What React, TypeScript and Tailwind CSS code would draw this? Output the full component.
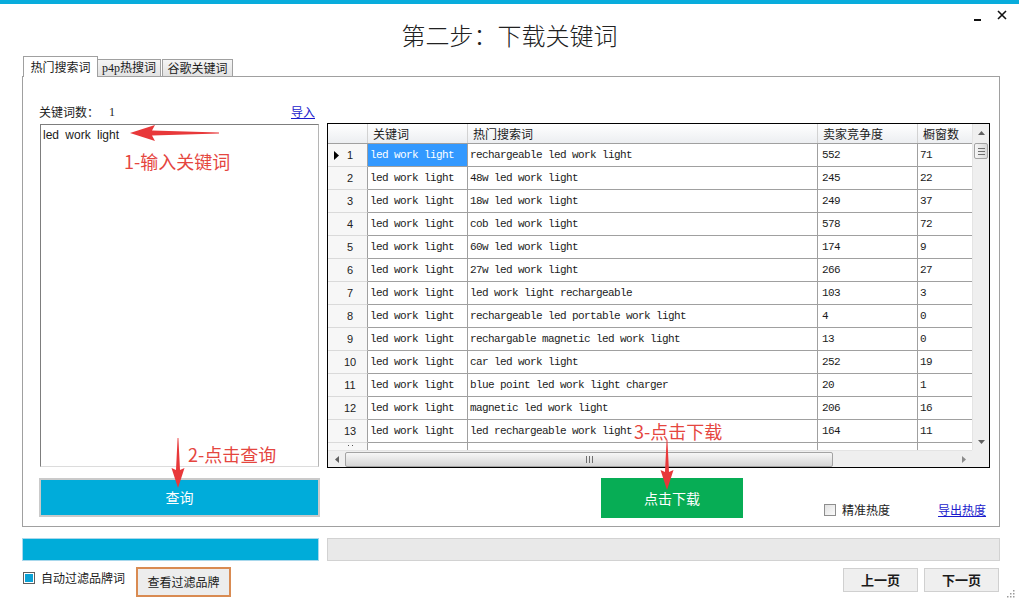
import React from "react";

const rows: [string, string, string][] = [
  ["rechargeable led work light", "552", "71"],
  ["48w led work light", "245", "22"],
  ["18w led work light", "249", "37"],
  ["cob led work light", "578", "72"],
  ["60w led work light", "174", "9"],
  ["27w led work light", "266", "27"],
  ["led work light rechargeable", "103", "3"],
  ["rechargeable led portable work light", "4", "0"],
  ["rechargable magnetic led work light", "13", "0"],
  ["car led work light", "252", "19"],
  ["blue point led work light charger", "20", "1"],
  ["magnetic led work light", "206", "16"],
  ["led rechargeable work light", "164", "11"],
];

const mono = "font-['Liberation_Mono',monospace] text-[11px] tracking-[-0.6px]";

function Thumb({ vertical }: { vertical?: boolean }) {
  return (
    <div
      className={
        vertical
          ? "h-[16px] mx-[1px] rounded-[2px] border border-[#a3a3a3] bg-gradient-to-r from-[#f6f6f6] to-[#dadada] flex flex-col items-center justify-center gap-[2px]"
          : "h-[15px] my-[1px] w-[488px] rounded-[2px] border border-[#a3a3a3] bg-gradient-to-b from-[#f6f6f6] to-[#d6d6d6] flex items-center justify-center gap-[2px]"
      }
    >
      {vertical
        ? [0, 1, 2].map((i) => <div key={i} className="w-[7px] h-[1px] bg-[#6f6f6f]" />)
        : [0, 1, 2].map((i) => <div key={i} className="w-[1px] h-[7px] bg-[#6f6f6f]" />)}
    </div>
  );
}

function Grid() {
  return (
    <div className="w-[663px] h-[345px] border border-black flex flex-col bg-white">
      <div className="flex h-[326px]">
        <div className="w-[644px] overflow-hidden flex flex-col">
          <div className="flex h-[20px] shrink-0 bg-gradient-to-b from-white to-[#eceef1] border-b border-[#a0a0a0] text-[12px] leading-[19px]">
            <div className="w-[40px] border-r border-[#d2d2d2]" />
            <div className="w-[100px] pl-[5px] border-r border-[#d2d2d2]">关键词</div>
            <div className="w-[350px] pl-[5px] border-r border-[#d2d2d2]">热门搜索词</div>
            <div className="w-[100px] pl-[5px] border-r border-[#d2d2d2]">卖家竞争度</div>
            <div className="w-[54px] pl-[5px]">橱窗数</div>
          </div>
          {rows.map((r, i) => (
            <div key={i} className="flex h-[23px] shrink-0">
              <div className="w-[40px] flex items-center bg-[#f7f7f7] border-b border-[#dadada] border-r border-r-[#a0a0a0]">
                <div className="w-[12px] flex justify-end pr-[1px]">
                  {i === 0 && (
                    <svg width="5" height="9" viewBox="0 0 5 9">
                      <polygon points="0,0 5,4.5 0,9" fill="#000" />
                    </svg>
                  )}
                </div>
                <div className="w-[20px] text-center font-['Liberation_Sans',sans-serif] text-[11px] text-[#222]">{i + 1}</div>
              </div>
              <div
                className={
                  "w-[100px] pl-[2px] flex items-center border-b border-r border-[#a0a0a0] " +
                  mono +
                  (i === 0 ? " bg-[#3399ff] text-white" : "")
                }
              >
                led work light
              </div>
              <div className={"w-[350px] pl-[2px] flex items-center border-b border-r border-[#a0a0a0] whitespace-nowrap " + mono}>
                {r[0]}
              </div>
              <div className={"w-[100px] pl-[4px] flex items-center border-b border-r border-[#a0a0a0] " + mono}>{r[1]}</div>
              <div className={"w-[54px] pl-[2px] flex items-center border-b border-[#a0a0a0] " + mono}>{r[2]}</div>
            </div>
          ))}
          <div className="flex h-[7px] shrink-0 overflow-hidden">
            <div className="w-[40px] bg-[#f7f7f7] border-r border-[#a0a0a0] flex justify-center pt-[2px]">
              <div className="flex gap-[3px] ml-[6px]">
                <div className="w-[1px] h-[1px] bg-[#555]" />
                <div className="w-[1px] h-[1px] bg-[#555]" />
              </div>
            </div>
            <div className="w-[100px] border-r border-[#a0a0a0]" />
            <div className="w-[350px] border-r border-[#a0a0a0]" />
            <div className="w-[100px] border-r border-[#a0a0a0]" />
            <div className="w-[54px]" />
          </div>
        </div>
        <div className="w-[17px] bg-[#efefef] border-l border-[#e4e4e4] flex flex-col">
          <div className="h-[17px] flex items-center justify-center">
            <svg width="7" height="4" viewBox="0 0 7 4">
              <polygon points="0,4 3.5,0 7,4" fill="#606060" />
            </svg>
          </div>
          <div className="mt-[2px]">
            <Thumb vertical />
          </div>
          <div className="flex-1" />
          <div className="h-[17px] flex items-center justify-center">
            <svg width="7" height="4" viewBox="0 0 7 4">
              <polygon points="0,0 3.5,4 7,0" fill="#606060" />
            </svg>
          </div>
        </div>
      </div>
      <div className="flex h-[17px]">
        <div className="w-[644px] bg-[#efefef] border-t border-[#e4e4e4] flex items-center">
          <div className="w-[17px] h-full flex items-center justify-center">
            <svg width="4" height="7" viewBox="0 0 4 7">
              <polygon points="4,0 0,3.5 4,7" fill="#606060" />
            </svg>
          </div>
          <Thumb />
          <div className="flex-1" />
          <div className="w-[17px] h-full flex items-center justify-center">
            <svg width="4" height="7" viewBox="0 0 4 7">
              <polygon points="0,0 4,3.5 0,7" fill="#8a8a8a" />
            </svg>
          </div>
        </div>
        <div className="w-[17px] bg-[#efefef]" />
      </div>
    </div>
  );
}

export default function App() {
  return (
    <div className="relative w-[1019px] h-[603px] bg-white overflow-hidden text-[#1b1b1b] font-['Noto_Sans_CJK_SC','Liberation_Sans',sans-serif]">
      <div className="h-[4px] bg-[#08acdc]" />
      <div className="flex h-[52px]">
        <div className="w-[90px]" />
        <div className="flex-1 flex justify-center items-center pt-[10px] text-[24px] leading-[30px] text-[#222] font-light">
          第二步：下载关键词
        </div>
        <div className="w-[90px] flex justify-end items-start pr-[12px] pt-[6px] gap-[15px]">
          <svg width="8" height="10" viewBox="0 0 8 10" className="mt-[1px]">
            <rect x="0" y="8" width="7" height="2" fill="#111" />
          </svg>
          <svg width="10" height="10" viewBox="0 0 10 10">
            <path d="M1 1 L9 9 M9 1 L1 9" stroke="#111" strokeWidth="1.6" />
          </svg>
        </div>
      </div>
      <div className="flex items-end h-[21px] pl-[23px] text-[12px]">
        <div className="relative z-10 w-[75px] h-[21px] bg-white border-t border-l border-r border-[#a0a0a0] flex items-center justify-center">
          热门搜索词
        </div>
        <div className="w-[63px] h-[18px] bg-gradient-to-b from-[#f5f5f5] to-[#e2e2e2] border border-[#a0a0a0] border-l-0 flex items-center justify-center font-['Liberation_Serif','Noto_Sans_CJK_SC',serif]">
          p4p热搜词
        </div>
        <div className="ml-[1px] w-[71px] h-[18px] bg-gradient-to-b from-[#f5f5f5] to-[#e2e2e2] border border-[#a0a0a0] flex items-center justify-center">
          谷歌关键词
        </div>
      </div>
      <div className="ml-[22px] -mt-[1px] w-[978px] h-[451px] border border-[#a0a0a0] bg-white flex pt-[27px] pl-[16px] gap-[7px]">
        <div className="w-[281px] flex flex-col">
          <div className="h-[16px] flex items-center text-[12px]">
            <span>关键词数：</span>
            <span className="ml-[10px] font-['Liberation_Serif',serif]">1</span>
            <span className="ml-auto mr-[5px] text-[#1a1acc] underline">导入</span>
          </div>
          <div className="mt-[4px] ml-[1px] w-[279px] h-[343px] border border-t-[#7d7d7d] border-l-[#7d7d7d] border-r-[#b5b5b5] border-b-[#dcdcdc] px-[2px] pt-[1px] font-['Liberation_Sans',sans-serif] text-[12px] [word-spacing:3px]">
            led work light
          </div>
          <div className="mt-[11px] h-[39px] w-[281px] border-2 border-[#cacaca] bg-[#00acda] flex items-center justify-center text-white text-[14px]">
            查询
          </div>
        </div>
        <div className="w-[663px] flex flex-col">
          <div className="mt-[19px]">
            <Grid />
          </div>
          <div className="mt-[10px] h-[40px] flex">
            <div className="ml-[274px] w-[142px] h-[40px] bg-[#07ad55] flex items-center justify-center text-white text-[14px]">
              点击下载
            </div>
            <div className="ml-[81px] mt-[25px] h-[14px] flex items-center text-[12px]">
              <div className="w-[12px] h-[12px] border border-[#8e8e8e] bg-gradient-to-br from-[#e2e2e2] to-[#fafafa]" />
              <span className="ml-[6px]">精准热度</span>
              <span className="ml-[48px] text-[#1a1acc] underline">导出热度</span>
            </div>
          </div>
        </div>
      </div>
      <div className="mt-[11px] ml-[22px] flex gap-[8px] h-[23px]">
        <div className="w-[297px] h-[23px] bg-[#00acd9] border border-[#a8d8ec]" />
        <div className="w-[673px] h-[23px] bg-[#e9e9e9] border border-[#d2d2d2]" />
      </div>
      <div className="mt-[6px] h-[30px] flex items-start text-[12px]">
        <div className="ml-[23px] mt-[5px] w-[12px] h-[12px] border border-[#5e5e5e] p-[1px] bg-white">
          <div className="w-full h-full bg-[#0aa2d6]" />
        </div>
        <span className="ml-[6px] mt-[3px] leading-[16px]">自动过滤品牌词</span>
        <div className="ml-[11px] w-[95px] h-[30px] border-2 border-[#d98b52] bg-[#ededed] flex items-center justify-center">
          查看过滤品牌
        </div>
        <div className="ml-auto mt-[1px] w-[75px] h-[24px] bg-[#efefef] border border-[#d0d0d0] flex items-center justify-center font-bold text-[13px]">
          上一页
        </div>
        <div className="ml-[6px] mt-[1px] w-[75px] h-[24px] bg-[#efefef] border border-[#d0d0d0] flex items-center justify-center font-bold text-[13px]">
          下一页
        </div>
        <svg width="10" height="10" viewBox="0 0 10 10" className="ml-[6px] mt-[23px] mr-[4px]">
          <rect x="8" y="0" width="1.5" height="1.5" fill="#9a9a9a" />
          <rect x="5" y="3" width="1.5" height="1.5" fill="#9a9a9a" />
          <rect x="8" y="3" width="1.5" height="1.5" fill="#9a9a9a" />
          <rect x="2" y="6" width="1.5" height="1.5" fill="#9a9a9a" />
          <rect x="5" y="6" width="1.5" height="1.5" fill="#9a9a9a" />
          <rect x="8" y="6" width="1.5" height="1.5" fill="#9a9a9a" />
        </svg>
      </div>

      <svg className="absolute left-[130px] top-[124px]" width="90" height="18" viewBox="0 0 90 18">
        <polygon points="0,9 25,1 22,6.5 89,8.6 89,9.4 22,11.5 25,17" fill="#e8383a" />
      </svg>
      <div className="absolute left-[124px] top-[149px] text-[18px] leading-[24px] text-[#e5463f]">1-输入关键词</div>

      <svg className="absolute left-[171px] top-[438px]" width="14" height="50" viewBox="0 0 14 50">
        <polygon points="6.6,0 7.4,0 9,32 13.5,30 7,50 0.5,30 5,32" fill="#e8383a" />
      </svg>
      <div className="absolute left-[188px] top-[442px] text-[18px] leading-[24px] text-[#e5463f]">2-点击查询</div>

      <svg className="absolute left-[660px] top-[440px]" width="14" height="50" viewBox="0 0 14 50">
        <polygon points="6.6,0 7.4,0 9,32 13.5,30 7,50 0.5,30 5,32" fill="#e8383a" />
      </svg>
      <div className="absolute left-[634px] top-[419px] text-[18px] leading-[24px] text-[#e5463f]">3-点击下载</div>
    </div>
  );
}
